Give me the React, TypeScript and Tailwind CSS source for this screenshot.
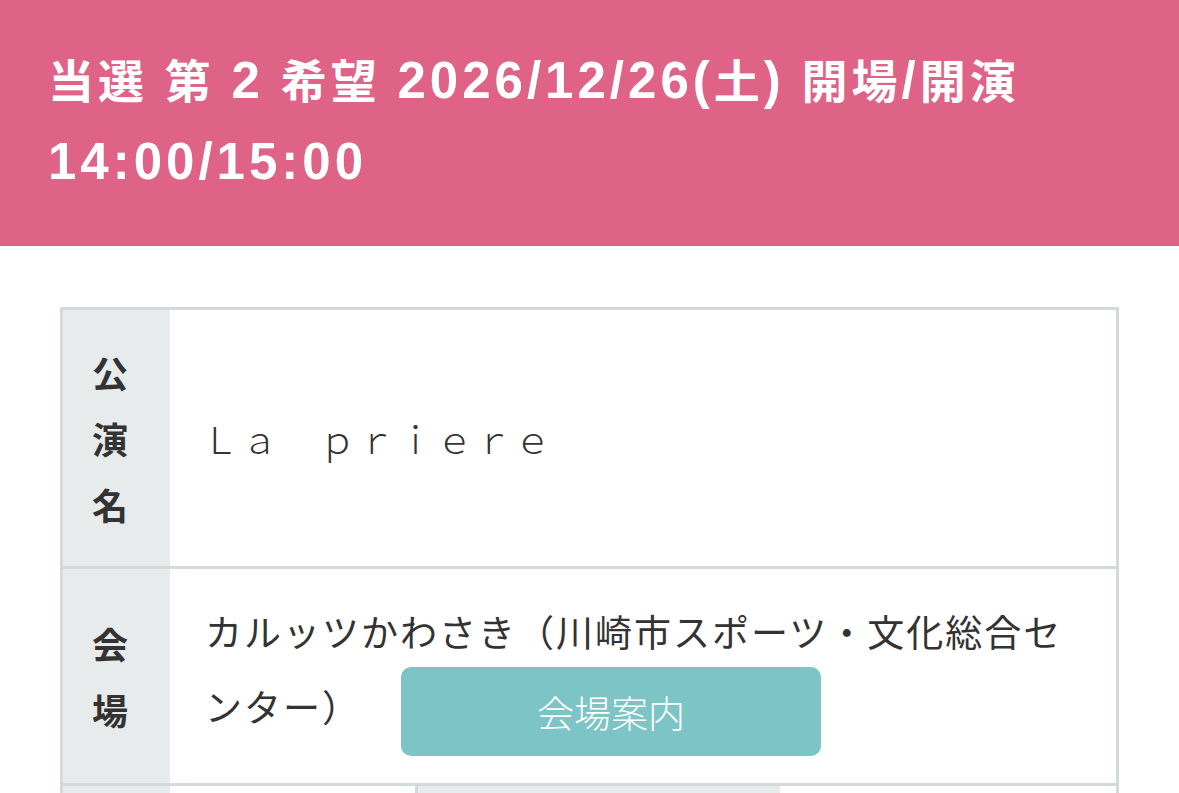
export default function App() {
  return (
    <div className="min-h-screen bg-white" style={{ fontFamily: '"Noto Sans CJK JP", sans-serif' }}>
      <div className="h-[246px] bg-[#de6386] px-[48px] pt-[41px]">
        <h1
          className="text-[46px] font-bold leading-[79px] text-white tracking-[4px]"
          style={{ fontFamily: '"Liberation Sans", "Noto Sans CJK JP", sans-serif' }}
        >
          当選 第 <span className="text-[51px]">2</span> 希望{' '}
          <span className="text-[51px]">2026/12/26(</span>土<span className="text-[51px]">)</span> 開場
          <span className="text-[51px]">/</span>開演
          <br />
          <span className="text-[51px]">14:00/15:00</span>
        </h1>
      </div>

      <div className="px-[60px] pt-[61px]">
        <div className="border-[3px] border-[#d3dada] text-[#333]">
          <div className="flex border-b-[3px] border-[#d3dada]">
            <div className="w-[107px] shrink-0 bg-[#e8ebec] py-[29px] pl-[29px]">
              <p className="w-[36px] text-[36px] font-bold leading-[66px]">公演名</p>
            </div>
            <div className="flex flex-1 items-center pl-[32px] pr-[35px]">
              <p className="text-[37px] leading-[72px] font-light tracking-[2px]">Ｌａ　ｐｒｉｅｒｅ</p>
            </div>
          </div>

          <div className="flex border-b-[3px] border-[#d3dada]">
            <div className="flex w-[107px] shrink-0 items-center bg-[#e8ebec] pl-[29px]">
              <p className="w-[36px] text-[36px] font-bold leading-[66px]">会場</p>
            </div>
            <div className="flex-1 px-[35px] pt-[26px] pb-[27px]">
              <p className="text-[37px] leading-[72px] tracking-[2px]">
                カルッツかわさき（川崎市スポーツ・文化総合センター）
                <a className="ml-[40px] inline-flex h-[89px] w-[420px] items-center justify-center rounded-[10px] bg-[#7cc4c5] align-middle text-[37px] font-light tracking-normal text-white">
                  会場案内
                </a>
              </p>
            </div>
          </div>

          <div className="flex h-[70px]">
            <div className="w-[107px] shrink-0 bg-[#e8ebec]" />
            <div className="w-[248px] shrink-0 border-r-[3px] border-[#d3dada]" />
            <div className="w-[362px] shrink-0 bg-[#e8ebec]" />
            <div className="flex-1" />
          </div>
        </div>
      </div>
    </div>
  )
}
